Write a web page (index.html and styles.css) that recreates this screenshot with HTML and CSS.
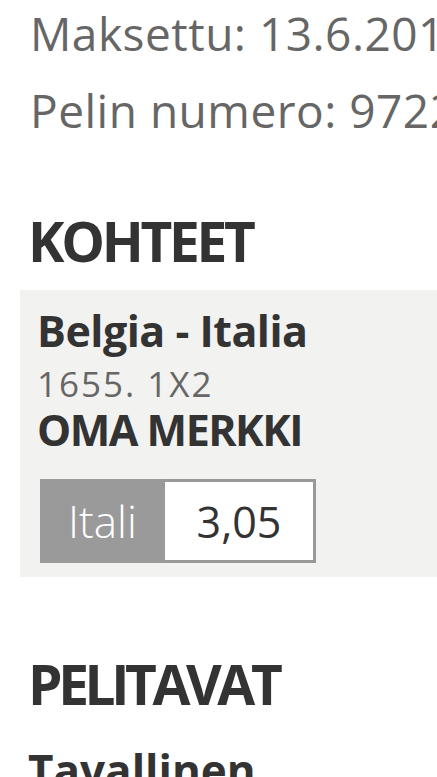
FILE: index.html
```html
<!DOCTYPE html>
<html lang="fi">
<head>
<meta charset="utf-8">
<link rel="stylesheet" href="styles.css">
</head>
<body>
<div class="page">
  <div class="meta">
    <p class="meta-line">Maksettu: 13.6.2018 klo 20:14</p>
    <p class="meta-line">Pelin numero: 9722 4410 1123</p>
  </div>
  <h2 class="section-title">KOHTEET</h2>
  <div class="item">
    <div class="item-name">Belgia - Italia</div>
    <div class="item-code">1655. 1X2</div>
    <div class="item-type">OMA MERKKI</div>
    <div class="pick">
      <span class="pick-label">Itali</span>
      <span class="pick-odds">3,05</span>
    </div>
  </div>
  <h2 class="section-title section-title-2">PELITAVAT</h2>
  <div class="play-type">Tavallinen</div>
</div>
</body>
</html>
```
FILE: styles.css
```css
html, body {
  margin: 0;
  padding: 0;
  background: #ffffff;
  overflow: hidden;
}
body {
  font-family: "Open Sans", "Noto Sans", sans-serif;
  color: #333333;
  white-space: nowrap;
}
.page {
  width: 437px;
  overflow: hidden;
}
.meta {
  padding: 0 0 0 30px;
}
.meta-line {
  margin: 0;
  font-size: 46px;
  line-height: 77px;
  letter-spacing: 0.5px;
  color: #666666;
}
.meta-line:first-child {
  margin-top: -5px;
}
.section-title {
  margin: 62px 0 0 28px;
  font-size: 55px;
  font-weight: 700;
  line-height: 60px;
  letter-spacing: -3.3px;
  color: #333333;
}
.item {
  margin: 19px 0 0 20px;
  padding: 18px 0 14px 17px;
  background: #f2f2f1;
}
.item-name {
  font-size: 43px;
  font-weight: 700;
  line-height: 46px;
  letter-spacing: -0.5px;
  color: #333333;
}
.item-code {
  margin: 10px 0 3px;
  font-size: 35px;
  line-height: 40px;
  letter-spacing: 2px;
  color: #666666;
}
.item-type {
  font-size: 43px;
  font-weight: 700;
  line-height: 46px;
  letter-spacing: -1.5px;
  color: #333333;
}
.pick {
  display: flex;
  margin: 26px 0 0 3px;
  width: 276px;
  height: 84px;
}
.pick-label {
  display: flex;
  align-items: center;
  justify-content: center;
  width: 125px;
  background: #9a9a9a;
  color: #ffffff;
  font-size: 44px;
  font-weight: 300;
}
.pick-odds {
  display: flex;
  align-items: center;
  justify-content: center;
  flex: 1;
  background: #ffffff;
  border: 3px solid #999999;
  border-left: none;
  color: #333333;
  font-size: 43px;
}
.section-title-2 {
  margin-top: 77px;
  letter-spacing: -4.4px;
}
.play-type {
  margin: 31px 0 0 28px;
  font-size: 44px;
  font-weight: 700;
  line-height: 50px;
  color: #333333;
}
```
